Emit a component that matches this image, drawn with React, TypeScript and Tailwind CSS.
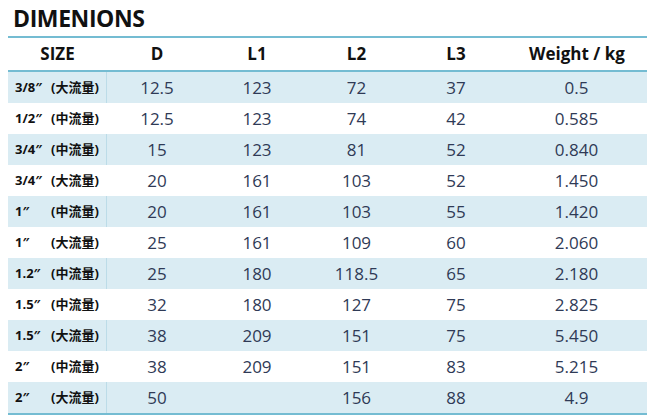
import React from "react";

type Row = { size: string; flow: string; d: string; l1: string; l2: string; l3: string; w: string };

const rows: Row[] = [
  { size: "3/8\u2033", flow: "(大流量)", d: "12.5", l1: "123", l2: "72", l3: "37", w: "0.5" },
  { size: "1/2\u2033", flow: "(中流量)", d: "12.5", l1: "123", l2: "74", l3: "42", w: "0.585" },
  { size: "3/4\u2033", flow: "(中流量)", d: "15", l1: "123", l2: "81", l3: "52", w: "0.840" },
  { size: "3/4\u2033", flow: "(大流量)", d: "20", l1: "161", l2: "103", l3: "52", w: "1.450" },
  { size: "1\u2033", flow: "(中流量)", d: "20", l1: "161", l2: "103", l3: "55", w: "1.420" },
  { size: "1\u2033", flow: "(大流量)", d: "25", l1: "161", l2: "109", l3: "60", w: "2.060" },
  { size: "1.2\u2033", flow: "(中流量)", d: "25", l1: "180", l2: "118.5", l3: "65", w: "2.180" },
  { size: "1.5\u2033", flow: "(中流量)", d: "32", l1: "180", l2: "127", l3: "75", w: "2.825" },
  { size: "1.5\u2033", flow: "(大流量)", d: "38", l1: "209", l2: "151", l3: "75", w: "5.450" },
  { size: "2\u2033", flow: "(中流量)", d: "38", l1: "209", l2: "151", l3: "83", w: "5.215" },
  { size: "2\u2033", flow: "(大流量)", d: "50", l1: "", l2: "156", l3: "88", w: "4.9" },
];

const font = { fontFamily: '"Open Sans", "Noto Sans CJK SC", sans-serif' };

export default function App() {
  return (
    <div className="w-[656px] h-[420px] bg-white overflow-hidden" style={font}>
      <div className="h-[36px] pl-[13px] pt-[1px] text-[23px] leading-[34px] font-bold text-[#111] tracking-[-0.4px]">
        DIMENIONS
      </div>
      <div className="ml-[8px] w-[639px]">
        <div className="grid grid-cols-[99px_100px_100px_99px_100px_141px] h-[36px] border-t-2 border-b-2 border-[#74bcd2] text-[17px] font-bold text-[#111] items-center text-center">
          <div>SIZE</div>
          <div>D</div>
          <div>L1</div>
          <div>L2</div>
          <div>L3</div>
          <div className="pl-[1px]">Weight / kg</div>
        </div>
        {rows.map((r, i) => {
          const blue = i % 2 === 0;
          return (
            <div
              key={i}
              className={
                "grid grid-cols-[99px_100px_100px_99px_100px_141px] h-[31px] items-center text-center text-[17px] text-[#2f3a56] " +
                (blue ? "bg-[#daecf3]" : "bg-white")
              }
            >
              <div
                className={
                  "h-full flex items-center pl-[7px] text-[13px] font-bold text-[#111] border-r " +
                  (blue ? "border-[#bcdce8]" : "border-white")
                }
              >
                <span className="w-[36px] text-left">{r.size}</span>
                <span>{r.flow}</span>
              </div>
              <div>{r.d}</div>
              <div>{r.l1}</div>
              <div>{r.l2}</div>
              <div>{r.l3}</div>
              <div>{r.w}</div>
            </div>
          );
        })}
        <div className="h-[2px] bg-[#74bcd2]" />
      </div>
    </div>
  );
}
